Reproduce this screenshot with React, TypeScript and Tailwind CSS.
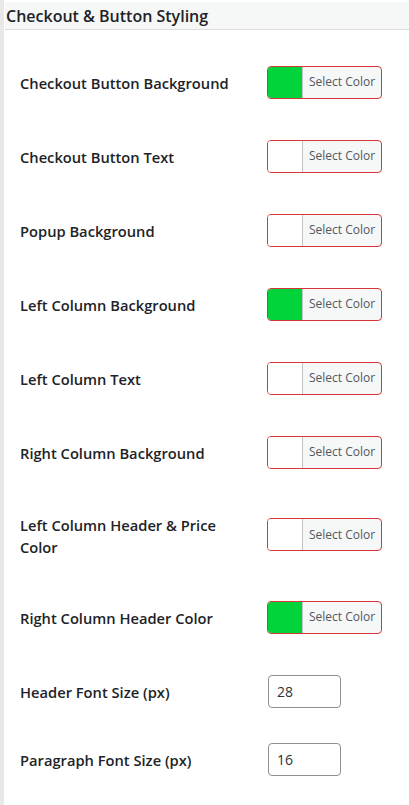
const font = { fontFamily: '"Open Sans", "Noto Sans", sans-serif' };

type Row = {
  label: React.ReactNode;
  kind: 'color' | 'number';
  value: string;
  h: string;
};

const rows: Row[] = [
  { label: 'Checkout Button Background', kind: 'color', value: '#00d43a', h: 'h-[74px]' },
  { label: 'Checkout Button Text', kind: 'color', value: '#ffffff', h: 'h-[74px]' },
  { label: 'Popup Background', kind: 'color', value: '#ffffff', h: 'h-[74px]' },
  { label: 'Left Column Background', kind: 'color', value: '#00d43a', h: 'h-[74px]' },
  { label: 'Left Column Text', kind: 'color', value: '#ffffff', h: 'h-[74px]' },
  { label: 'Right Column Background', kind: 'color', value: '#ffffff', h: 'h-[74px]' },
  {
    label: (
      <>
        Left Column Header &amp; Price
        <br />
        Color
      </>
    ),
    kind: 'color',
    value: '#ffffff',
    h: 'h-[91px]',
  },
  { label: 'Right Column Header Color', kind: 'color', value: '#00d43a', h: 'h-[74px]' },
  { label: 'Header Font Size (px)', kind: 'number', value: '28', h: 'h-[74px]' },
  { label: 'Paragraph Font Size (px)', kind: 'number', value: '16', h: 'h-[62px]' },
];

function ColorPicker({ value }: { value: string }) {
  return (
    <button
      type="button"
      className="flex h-[33px] w-[115px] overflow-hidden rounded-[4px] border border-[#d63638] bg-[#f6f7f7]"
    >
      <span className="h-full w-[35px] shrink-0 border-r border-[#c3c4c7]" style={{ background: value }} />
      <span className="flex h-full flex-1 items-center justify-center text-[12px] text-[#50575e]">
        Select Color
      </span>
    </button>
  );
}

function NumberInput({ value }: { value: string }) {
  return (
    <input
      type="text"
      defaultValue={value}
      className="ml-px h-[33px] w-[73px] rounded-[4px] border border-[#8c8f94] bg-white px-2 text-[14px] text-[#2c3338] outline-none"
      style={font}
    />
  );
}

export default function App() {
  return (
    <div className="flex min-h-[805px] w-[409px] bg-white text-[#1d2327]" style={font}>
      <div className="w-[4px] shrink-0 bg-[#e8e8e8]" />
      <div className="min-w-0 flex-1 pl-px pt-[2px]">
        <div className="flex h-[28px] items-center border-b border-[#dcdcde] bg-[#f6f7f7] pl-px">
          <h2 className="text-[16px] font-semibold leading-none">Checkout &amp; Button Styling</h2>
        </div>
        <div className="mt-[15px] pl-[15px]">
          {rows.map((r, i) => (
            <div key={i} className={`flex items-center ${r.h}`}>
              <div className="w-[247px] shrink-0 pt-[2px] text-[14.7px] font-semibold leading-[22px]">{r.label}</div>
              {r.kind === 'color' ? <ColorPicker value={r.value} /> : <NumberInput value={r.value} />}
            </div>
          ))}
        </div>
      </div>
    </div>
  );
}
